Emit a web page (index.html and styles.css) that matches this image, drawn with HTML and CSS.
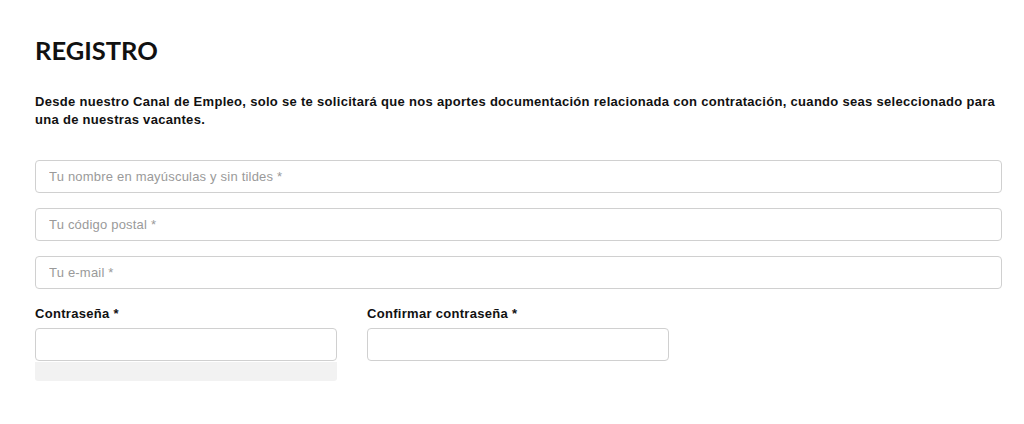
FILE: index.html
```html
<!DOCTYPE html>
<html lang="es">
  <head>
    <meta charset="UTF-8" />
    <meta name="viewport" content="width=device-width, initial-scale=1.0" />
    <title>Registro</title>
    <link rel="stylesheet" href="styles.css">
  </head>
  <body>
    <div class="registro">
      <h1>REGISTRO</h1>
      <p class="intro">
        Desde nuestro Canal de Empleo, solo se te solicitará que nos aportes documentación relacionada con contratación, cuando seas seleccionado para una de nuestras vacantes.
      </p>
      <form class="form">
        <input type="text" class="field" placeholder="Tu nombre en mayúsculas y sin tildes *" />
        <input type="text" class="field" placeholder="Tu código postal *" />
        <input type="email" class="field" placeholder="Tu e-mail *" />
        <div class="pass-row">
          <div class="pass-col">
            <label for="pass">Contraseña *</label>
            <input type="password" id="pass" class="field" />
            <div class="strength"></div>
          </div>
          <div class="pass-col">
            <label for="pass2">Confirmar contraseña *</label>
            <input type="password" id="pass2" class="field" />
          </div>
        </div>
      </form>
    </div>
  </body>
</html>
```

FILE: styles.css
```css
body {
  margin: 0;
  background: #fff;
  color: #111;
  font-family: "Liberation Sans", Arial, sans-serif;
}
.registro {
  width: 967px;
  margin-left: 35px;
  padding-top: 34px;
}
h1 {
  font-family: Lato, "Liberation Sans", sans-serif;
  font-weight: 700;
  font-size: 25.5px;
  margin: 0;
  line-height: 32px;
  color: #111;
}
.intro {
  font-size: 13px;
  font-weight: bold;
  letter-spacing: 0.3px;
  line-height: 18px;
  margin: 27px 0 0;
}
.form {
  display: flex;
  flex-direction: column;
  gap: 15px;
  margin-top: 31px;
}
.field {
  box-sizing: border-box;
  width: 100%;
  height: 33px;
  padding: 0 13px;
  border: 1px solid #d0d0d0;
  border-radius: 4px;
  font-family: "Liberation Sans", Arial, sans-serif;
  font-size: 13px;
  letter-spacing: 0.2px;
  color: #333;
  background: #fff;
  outline: none;
}
.field::placeholder {
  color: #9a9a9a;
}
.pass-row {
  display: flex;
  gap: 30px;
  margin-top: 3px;
}
.pass-col {
  width: 302px;
  display: flex;
  flex-direction: column;
}
.pass-col label {
  font-size: 13px;
  font-weight: bold;
  letter-spacing: 0.3px;
  line-height: 14px;
  margin-bottom: 7px;
}
.strength {
  height: 19px;
  margin-top: 1px;
  background: #f2f2f2;
  border-radius: 0 0 3px 3px;
}
```
